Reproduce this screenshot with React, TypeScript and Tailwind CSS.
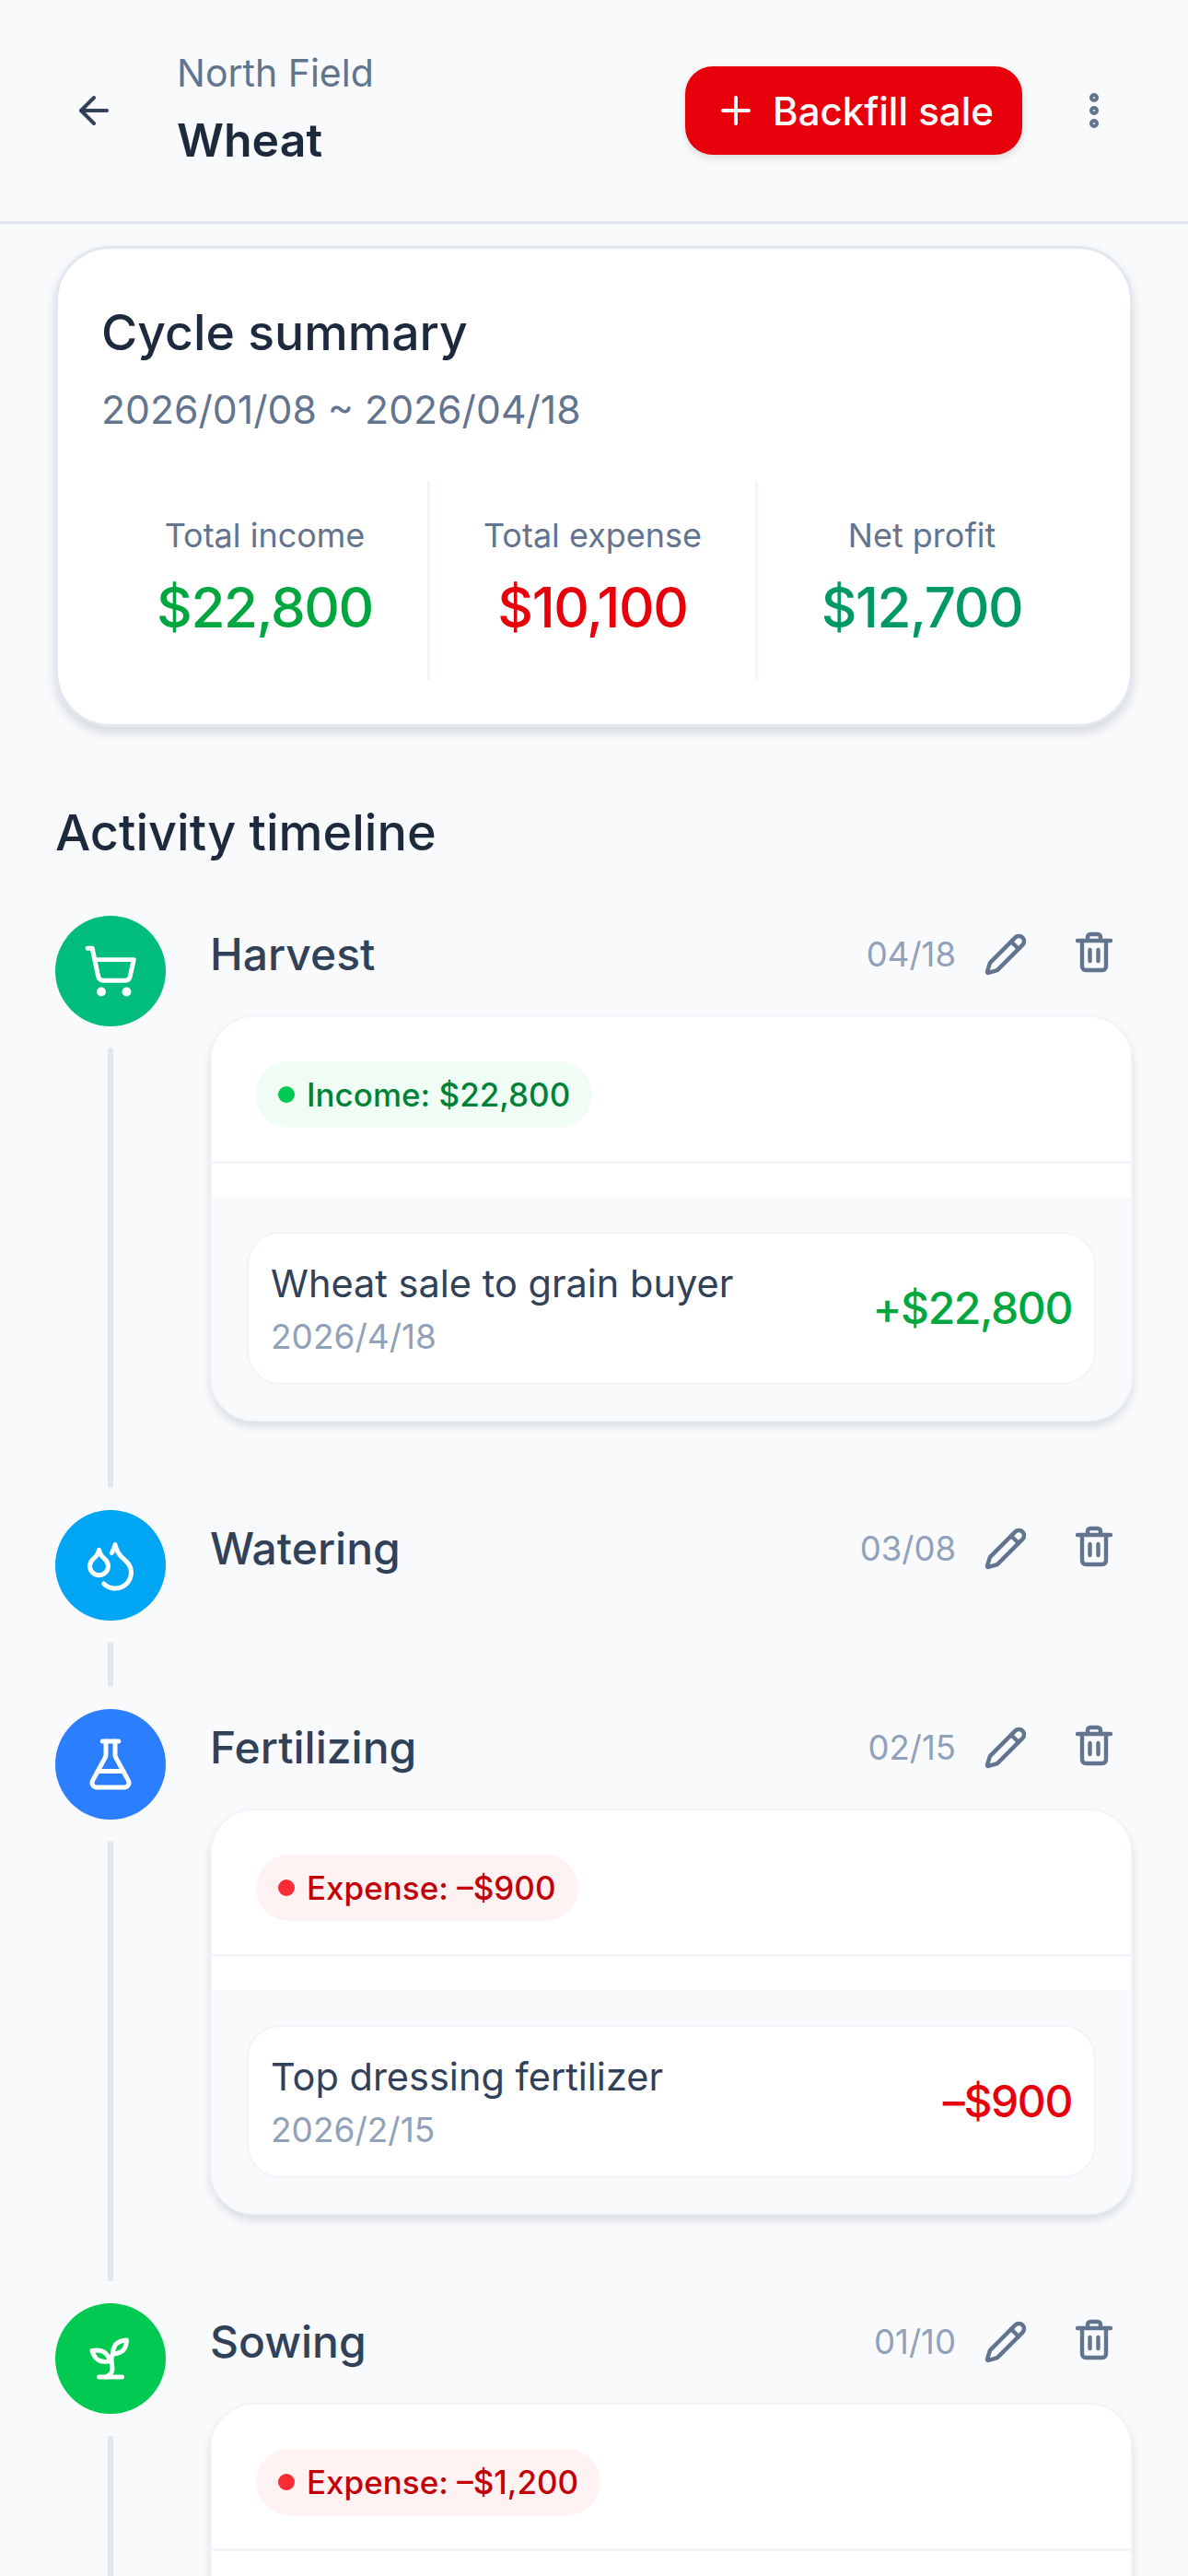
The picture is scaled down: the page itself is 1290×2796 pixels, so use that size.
import { ArrowLeft, Droplets, EllipsisVertical, FlaskConical, Pencil, Plus, ShoppingCart } from 'lucide-react';
import type { ComponentType } from 'react';

type IconProps = { className?: string; strokeWidth?: number };

type Entry = {
  title: string;
  date: string;
  icon: ComponentType<IconProps>;
  iconBg: string;
  chip?: { kind: 'income' | 'expense'; label: string };
  line?: { name: string; date: string; amount: string };
};

function SproutIcon({ className }: IconProps) {
  return (
    <svg viewBox="0 0 24 24" fill="none" stroke="currentColor" strokeWidth={2} strokeLinecap="round" strokeLinejoin="round" className={className}>
      <path d="M7 20h10" />
      <path d="M10 20c5.5-2.5.8-6.4 3-10" />
      <path d="M9.5 9.4c1.1.8 1.8 2.2 2.3 3.7-2 .4-3.5.4-4.8-.3-1.2-.6-2.3-1.9-3-4.2 2.8-.5 4.4 0 5.5.8z" />
      <path d="M14.1 6a7 7 0 0 0-1.1 4c1.9-.1 3.3-.6 4.3-1.4 1-1 1.6-2.3 1.7-4.6-2.7.1-4 1-4.9 2z" />
    </svg>
  );
}

function TrashIcon({ className }: IconProps) {
  return (
    <svg viewBox="0 0 48 48" fill="none" stroke="currentColor" strokeWidth={4.4} strokeLinecap="round" strokeLinejoin="round" className={className}>
      <path d="M6 11h36" />
      <path d="M11 11v28a4 4 0 0 0 4 4h18a4 4 0 0 0 4-4V11" />
      <path d="M17 11V7a3 3 0 0 1 3-3h8a3 3 0 0 1 3 3v4" />
      <path d="M19.5 21v12" />
      <path d="M28.5 21v12" />
    </svg>
  );
}

const entries: Entry[] = [
  {
    title: 'Harvest',
    date: '04/18',
    icon: ShoppingCart,
    iconBg: 'bg-emerald-500',
    chip: { kind: 'income', label: 'Income: $22,800' },
    line: { name: 'Wheat sale to grain buyer', date: '2026/4/18', amount: '+$22,800' },
  },
  { title: 'Watering', date: '03/08', icon: Droplets, iconBg: 'bg-sky-500' },
  {
    title: 'Fertilizing',
    date: '02/15',
    icon: FlaskConical,
    iconBg: 'bg-blue-500',
    chip: { kind: 'expense', label: 'Expense: –$900' },
    line: { name: 'Top dressing fertilizer', date: '2026/2/15', amount: '–$900' },
  },
  {
    title: 'Sowing',
    date: '01/10',
    icon: SproutIcon,
    iconBg: 'bg-green-500',
    chip: { kind: 'expense', label: 'Expense: –$1,200' },
  },
];

const stats = [
  { label: 'Total income', value: '$22,800', color: 'text-green-600' },
  { label: 'Total expense', value: '$10,100', color: 'text-red-600' },
  { label: 'Net profit', value: '$12,700', color: 'text-emerald-600' },
];

function TimelineItem({ entry }: { entry: Entry }) {
  const income = entry.chip?.kind === 'income';
  return (
    <div className="flex gap-12">
      <div className="flex w-[120px] shrink-0 flex-col items-center">
        <div className={`flex h-[120px] w-[120px] items-center justify-center rounded-full ${entry.iconBg}`}>
          <entry.icon className="h-[60px] w-[60px] text-white" strokeWidth={2} />
        </div>
        <div className="my-6 min-h-12 w-1.5 flex-1 bg-slate-200" />
      </div>
      <div className="min-w-0 flex-1">
        <div className="flex h-[84px] items-center">
          <div className="flex-1 text-[48px] font-medium text-slate-700">{entry.title}</div>
          <div className="text-[36.5px] text-slate-400">{entry.date}</div>
          <Pencil className="ml-[30px] h-[48px] w-[48px] text-slate-500" strokeWidth={2.2} />
          <TrashIcon className="mr-[18px] ml-[48px] h-[48px] w-[48px] -translate-y-[2px] text-slate-500" />
        </div>
        {entry.chip && (
          <div className="mt-[24px] mb-[96px] overflow-hidden rounded-[48px] border-2 border-slate-100 bg-white shadow-[0_6px_10px_rgba(15,23,42,0.12)]">
            <div className="border-b-[3px] border-slate-100 px-12 pt-[48px] pb-9">
              <span
                className={`inline-flex h-[72px] items-center gap-[13px] rounded-full px-6 text-[35px] font-medium ${income ? 'bg-green-50 text-green-700' : 'bg-red-50 text-red-700'}`}
              >
                <span className={`h-[18px] w-[18px] rounded-full ${income ? 'bg-green-500' : 'bg-red-500'}`} />
                {entry.chip.label}
              </span>
            </div>
            <div className="h-[36px]" />
            <div className="bg-slate-50 px-[38px] py-[38px]">
              {entry.line ? (
                <div className="flex h-[166px] items-center justify-between rounded-[36px] border-2 border-slate-100 bg-white px-6">
                  <div>
                    <div className="text-[41.5px] text-slate-700">{entry.line.name}</div>
                    <div className="text-[37px] leading-[54px] text-slate-400">{entry.line.date}</div>
                  </div>
                  <div className={`text-[48px] font-medium tracking-[-1.4px] ${income ? 'text-green-600' : 'text-red-600'}`}>{entry.line.amount}</div>
                </div>
              ) : (
                <div className="h-[166px]" />
              )}
            </div>
          </div>
        )}
      </div>
    </div>
  );
}

export default function App() {
  return (
    <div className="h-[2796px] overflow-hidden bg-slate-50 font-['Inter',sans-serif]">
      <header className="flex h-[243px] items-center border-b-[3px] border-slate-200 pr-[78px]">
        <ArrowLeft className="ml-[78px] h-[48px] w-[48px] text-slate-700" strokeWidth={2} />
        <div className="ml-[66px] flex-1 pb-[3px]">
          <div className="text-[41px] leading-[60px] text-slate-500">North Field</div>
          <div className="mt-[7px] text-[50px] leading-[72px] font-semibold text-slate-800">Wheat</div>
        </div>
        <button className="flex h-24 w-[366px] items-center justify-center gap-4 rounded-[30px] bg-red-600 text-[42px] font-medium text-white shadow-[0_4px_8px_rgba(0,0,0,0.12)]">
          <Plus className="h-[48px] w-[48px]" strokeWidth={2} />
          Backfill sale
        </button>
        <EllipsisVertical className="ml-[54px] h-[48px] w-[48px] text-slate-500" strokeWidth={3} />
      </header>

      <main className="px-[60px] pt-6">
        <section className="rounded-[60px] border-[3px] border-slate-200 bg-white px-[48px] pt-[58px] pb-[48px] shadow-[0_6px_12px_rgba(15,23,42,0.15)]">
          <h2 className="-ml-px text-[53.5px] leading-[66px] font-medium text-slate-800">Cycle summary</h2>
          <p className="mt-6 -ml-px text-[42.7px] leading-[54px] text-slate-500">2026/01/08 ~ 2026/04/18</p>
          <div className="mt-[50px] grid h-[216px] grid-cols-3 divide-x-[3px] divide-slate-100">
            {stats.map((stat) => (
              <div key={stat.label} className="flex flex-col items-center justify-center gap-[15px] pb-3">
                <div className="text-[36px] text-slate-500">{stat.label}</div>
                <div className={`text-[60px] leading-[72px] font-medium tracking-[-1.4px] ${stat.color}`}>{stat.value}</div>
              </div>
            ))}
          </div>
        </section>

        <h2 className="mt-[82px] mb-[57px] text-[54px] leading-[66px] font-medium text-slate-800">Activity timeline</h2>

        <div>
          {entries.map((entry) => (
            <TimelineItem key={entry.title} entry={entry} />
          ))}
        </div>
      </main>
    </div>
  );
}
